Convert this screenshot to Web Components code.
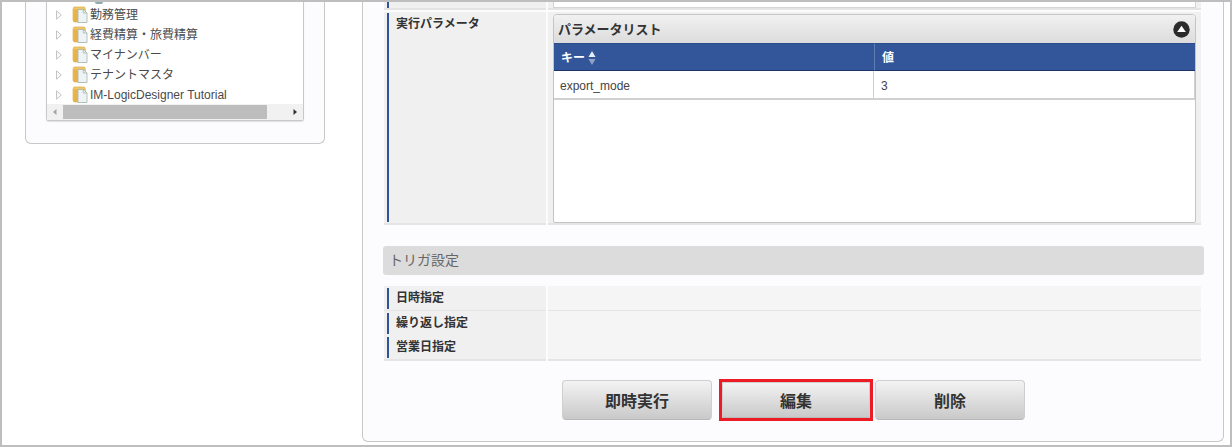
<!DOCTYPE html>
<html lang="ja">
<head>
<meta charset="utf-8">
<title>ジョブネット詳細</title>
<style>
  html, body { margin: 0; padding: 0; background: #fff; }
</style>
</head>
<body>
<app-frame>
  <side-panel slot="side">
    <tree-item>勤務管理</tree-item>
    <tree-item>経費精算・旅費精算</tree-item>
    <tree-item>マイナンバー</tree-item>
    <tree-item>テナントマスタ</tree-item>
    <tree-item>IM-LogicDesigner Tutorial</tree-item>
  </side-panel>
  <main-panel slot="main">
    <form-row stub></form-row>
    <form-row label="実行パラメータ" tall>
      <param-list title="パラメータリスト"></param-list>
    </form-row>
    <section-bar>トリガ設定</section-bar>
    <form-row label="日時指定" size="25"></form-row>
    <form-row label="繰り返し指定" size="24"></form-row>
    <form-row label="営業日指定" size="24"></form-row>
    <action-bar>
      <action-btn>即時実行</action-btn>
      <action-btn highlight>編集</action-btn>
      <action-btn>削除</action-btn>
    </action-bar>
  </main-panel>
</app-frame>

<script>
const FONT = `"Liberation Sans", "Noto Sans CJK JP", sans-serif`;

class AppFrame extends HTMLElement {
  constructor() {
    super();
    this.attachShadow({ mode: 'open' });
    this.shadowRoot.innerHTML = `
      <style>
        :host {
          display: flex;
          box-sizing: border-box;
          width: 1232px;
          height: 447px;
          border: 2px solid #bebebe;
          background: #fff;
          overflow: hidden;
          font-family: ${FONT};
          color: #333;
        }
      </style>
      <slot name="side"></slot>
      <slot name="main"></slot>
    `;
  }
}

class SidePanel extends HTMLElement {
  constructor() {
    super();
    this.attachShadow({ mode: 'open' });
    this.shadowRoot.innerHTML = `
      <style>
        :host {
          display: block;
          box-sizing: border-box;
          flex: none;
          width: 300px;
          height: 142px;
          margin-left: 23px;
          padding: 0 20px;
          background: #fcfcfe;
          border: 1px solid #c8c8c8;
          border-top: 0;
          border-radius: 0 0 6px 6px;
        }
        .tree {
          box-sizing: border-box;
          width: 258px;
          height: 119px;
          background: #fff;
          border: 1px solid #c8c8c8;
          border-top: 0;
          border-radius: 0 0 3px 3px;
          box-shadow: 0 1px 1px #e0e0e0;
        }
        .cut {
          height: 2px;
          overflow: hidden;
        }
        .cut i {
          display: block;
          width: 8px;
          height: 2px;
          margin-left: 48px;
          background: #8fa9b0;
          border-radius: 0 0 4px 4px;
        }
        .bar {
          display: flex;
          align-items: center;
          height: 16px;
          background: #f1f1f1;
        }
        .bar svg { flex: none; width: 16px; height: 16px; }
        .thumb { flex: none; width: 204px; height: 14px; background: #bdbdbd; }
        .gap { flex: 1; }
      </style>
      <div class="tree">
        <div class="cut"><i></i></div>
        <slot></slot>
        <div class="bar">
          <svg viewBox="0 0 16 16"><path d="M9.500 5 6 8l3.500 3z" fill="#a3a3a3"/></svg>
          <div class="thumb"></div>
          <div class="gap"></div>
          <svg viewBox="0 0 16 16"><path d="M6.500 5 10 8l-3.500 3z" fill="#333"/></svg>
        </div>
      </div>
    `;
  }
}

class TreeItem extends HTMLElement {
  constructor() {
    super();
    this.attachShadow({ mode: 'open' });
    this.shadowRoot.innerHTML = `
      <style>
        :host {
          display: flex;
          align-items: center;
          height: 20px;
          padding-left: 9px;
          font-size: 12px;
          line-height: 20px;
          color: #4a4a4a;
          white-space: nowrap;
        }
        .arrow { flex: none; width: 6px; height: 10px; margin: 2px 10px 0 0; }
        .folder { flex: none; width: 16px; height: 17px; margin-right: 2px; }
        .label { padding-top: 2px; }
      </style>
      <svg class="arrow" viewBox="0 0 6 10"><path d="M.5 .8 5.300 5 .5 9.200z" fill="#fafafa" stroke="#c4c4c4"/></svg>
      <svg class="folder" viewBox="0 0 16 17">
        <path d="M1 3 2 1h10.500l.8 1.500V16H3q-2 0-2-2z" fill="#efc668" stroke="#dcb050" stroke-width=".7"/>
        <path d="M1.500 3.500h4V16H3q-1.500 0-1.500-1.500z" fill="#e6b24a"/>
        <path d="M6 3.500h5.500l3.500 3.500v9.500H6z" fill="#eef4f5" stroke="#a3b2aa" stroke-width=".8"/>
        <path d="M11.300 3.500V7H15" fill="none" stroke="#a3b2aa" stroke-width=".8"/>
      </svg>
      <span class="label"><slot></slot></span>
    `;
  }
}

class MainPanel extends HTMLElement {
  constructor() {
    super();
    this.attachShadow({ mode: 'open' });
    this.shadowRoot.innerHTML = `
      <style>
        :host {
          display: block;
          box-sizing: border-box;
          flex: none;
          width: 862px;
          height: 440px;
          margin-left: 37px;
          padding: 0 0 0 21px;
          background: #fcfcfe;
          border: 1px solid #c8c8c8;
          border-top: 0;
          border-radius: 0 0 6px 6px;
        }
      </style>
      <slot></slot>
    `;
  }
}

class FormRow extends HTMLElement {
  constructor() {
    super();
    this.attachShadow({ mode: 'open' });
  }

  connectedCallback() {
    const stub = this.hasAttribute('stub');
    const tall = this.hasAttribute('tall');
    const size = stub ? 8 : tall ? 213 : Number(this.getAttribute('size') || 24);
    const plain = !stub && !tall;
    this.shadowRoot.innerHTML = `
      <style>
        :host {
          display: grid;
          grid-template-columns: 162px 653px;
          column-gap: 2px;
          box-sizing: border-box;
          width: 817px;
          height: ${size}px;
          padding-bottom: ${plain ? 1 : 0}px;
          margin-bottom: ${stub ? 2 : 0}px;
        }
        .cell {
          box-sizing: border-box;
          background: #f0f0f0;
          border-bottom: 2px solid #e4e4e4;
          padding: ${stub ? '0 3px' : tall ? '1px 3px' : '2px 3px 1px'};
          min-width: 0;
        }
        .value {
          background: ${plain ? '#f5f5f5' : '#f0f0f0'};
          padding: ${tall ? '2px 5px 0' : 0};
        }
        .mark {
          box-sizing: border-box;
          height: 100%;
          padding: ${tall ? 4 : 0}px 0 0 7px;
          border-left: 2px solid #30549c;
          font-size: 12px;
          font-weight: bold;
          line-height: ${tall ? 14 : 21}px;
          color: #333;
        }
        ${stub ? '.value div { height: 100%; margin: 0 5px; background: #fff; border: 1px solid #d4d4d4; border-top: 0; box-sizing: border-box; }' : ''}
      </style>
      <div class="cell"><div class="mark">${this.getAttribute('label') || ''}</div></div>
      <div class="cell value">${stub ? '<div></div>' : '<slot></slot>'}</div>
    `;
  }
}

class ParamList extends HTMLElement {
  constructor() {
    super();
    this.attachShadow({ mode: 'open' });
  }

  connectedCallback() {
    this.shadowRoot.innerHTML = `
      <style>
        :host {
          display: block;
          box-sizing: border-box;
          height: 209px;
          background: #fff;
          border: 1px solid #c4c4c4;
          border-radius: 4px 4px 2px 2px;
          overflow: hidden;
        }
        .head {
          display: flex;
          align-items: center;
          justify-content: space-between;
          box-sizing: border-box;
          height: 28px;
          padding: 0 5px 0 4px;
          background: linear-gradient(#f1f1f1, #dcdcdc);
          font-size: 13px;
          line-height: 30px;
          font-weight: bold;
          color: #333;
        }
        .head span { height: 28px; }
        .head svg { width: 17px; height: 17px; }
        .cols {
          display: grid;
          grid-template-columns: 320px 321px;
          font-size: 12px;
        }
        .th {
          box-sizing: border-box;
          display: flex;
          align-items: center;
          gap: 3px;
          height: 28px;
          padding: 1px 0 0 7px;
          background: #325699;
          border-top: 1px solid #2c4d8c;
          border-bottom: 1px solid #1d3566;
          color: #fff;
          font-weight: bold;
          line-height: 26px;
        }
        .th + .th { border-left: 1px solid #5f7cb3; }
        .th svg { width: 8px; height: 16px; }
        .td {
          box-sizing: border-box;
          height: 29px;
          padding: 1px 0 0 6px;
          line-height: 28px;
          color: #444;
          border-bottom: 2px solid #d0d0d0;
          border-right: 1px solid #d0d0d0;
        }
        .td + .td { padding-left: 7px; }
      </style>
      <div class="head">
        <span>${this.getAttribute('title')}</span>
        <svg viewBox="0 0 17 17">
          <circle cx="8.500" cy="8.500" r="8.200" fill="#2b2b2b"/>
          <path d="M8.500 4.800 12.800 11H4.200z" fill="#fff"/>
        </svg>
      </div>
      <div class="cols">
        <div class="th">キー<svg viewBox="0 0 8 16"><path d="M4 1 7.500 7h-7z" fill="#e8ecf4"/><path d="M4 15 7.500 9h-7z" fill="#8fa2c8"/></svg></div>
        <div class="th">値</div>
        <div class="td">export_mode</div>
        <div class="td">3</div>
      </div>
    `;
  }
}

class SectionBar extends HTMLElement {
  constructor() {
    super();
    this.attachShadow({ mode: 'open' });
    this.shadowRoot.innerHTML = `
      <style>
        :host {
          display: block;
          box-sizing: border-box;
          width: 821px;
          height: 29px;
          margin: 21px 0 11px -1px;
          padding-left: 6px;
          background: #dcdcdc;
          border-radius: 3px;
          font-size: 14px;
          line-height: 29px;
          color: #666;
        }
      </style>
      <slot></slot>
    `;
  }
}

class ActionBar extends HTMLElement {
  constructor() {
    super();
    this.attachShadow({ mode: 'open' });
    this.shadowRoot.innerHTML = `
      <style>
        :host {
          display: flex;
          align-items: center;
          height: 42px;
          margin-top: 20px;
          margin-left: 178px;
        }
      </style>
      <slot></slot>
    `;
  }
}

class ActionBtn extends HTMLElement {
  constructor() {
    super();
    this.attachShadow({ mode: 'open' });
    this.shadowRoot.innerHTML = `
      <style>
        :host {
          display: block;
          flex: none;
          box-sizing: border-box;
          margin-right: 7px;
        }
        :host([highlight]) {
          border: 3px solid #ed1c24;
          margin-right: 2px;
        }
        button {
          display: block;
          box-sizing: border-box;
          width: 150px;
          height: 40px;
          padding: 0;
          font: bold 16px ${FONT};
          color: #333;
          background: linear-gradient(#f3f3f3, #c9c9c9);
          border: 1px solid #cfcfcf;
          border-bottom-color: #b8b8b8;
          border-radius: 4px;
        }
        :host([highlight]) button {
          width: 148px;
          height: 36px;
          border-radius: 0;
        }
      </style>
      <button type="button"><slot></slot></button>
    `;
  }
}

customElements.define('app-frame', AppFrame);
customElements.define('side-panel', SidePanel);
customElements.define('tree-item', TreeItem);
customElements.define('main-panel', MainPanel);
customElements.define('form-row', FormRow);
customElements.define('param-list', ParamList);
customElements.define('section-bar', SectionBar);
customElements.define('action-bar', ActionBar);
customElements.define('action-btn', ActionBtn);
</script>
</body>
</html>
